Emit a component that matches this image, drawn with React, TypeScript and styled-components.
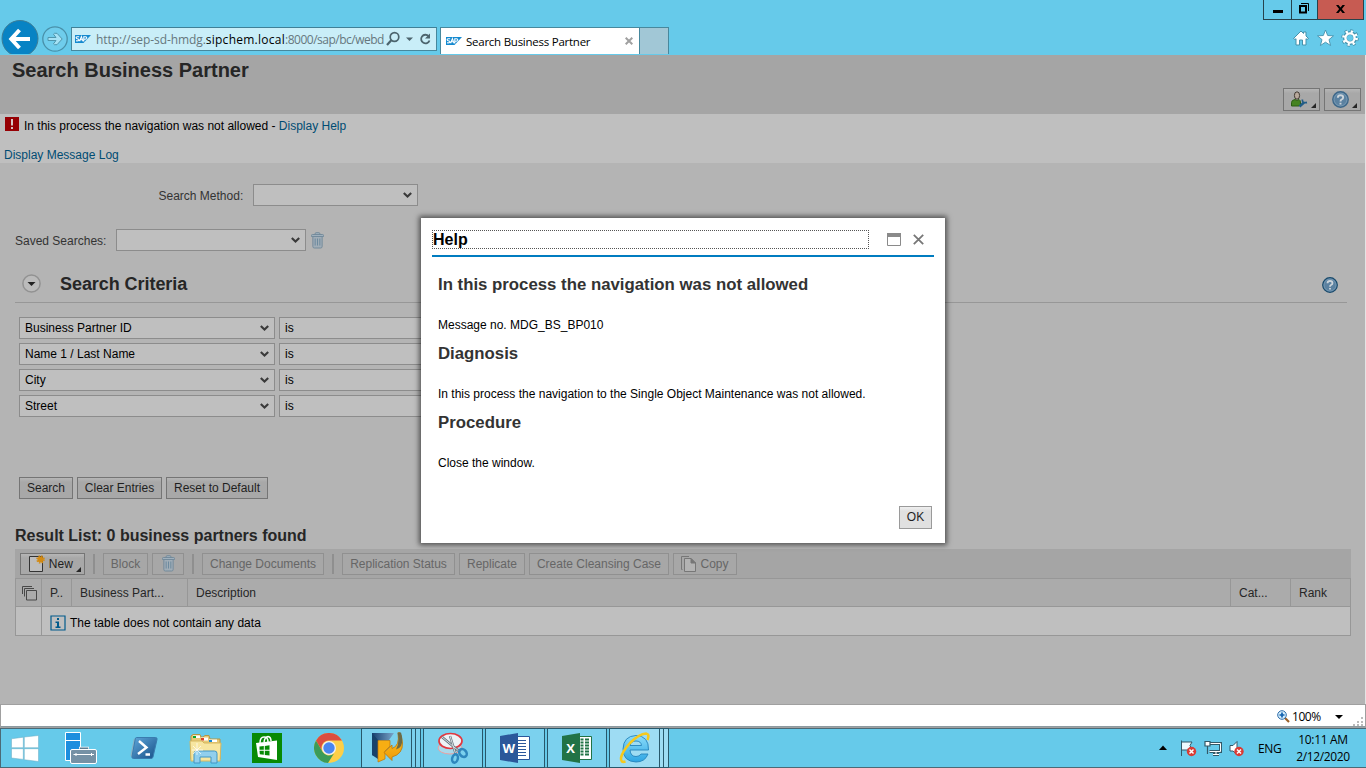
import React from "react";
import styled, { createGlobalStyle } from "styled-components";

const Global = createGlobalStyle`
  * { box-sizing: border-box; }
  html, body { margin: 0; padding: 0; width: 1366px; height: 768px; overflow: hidden; }
  svg { display: block; flex: none; }
`;

const ARIAL = `"Liberation Sans", Arial, sans-serif`;
const SEGOE = `"Open Sans", "Noto Sans", sans-serif`;
const SKY = "#66caea";

const Desktop = styled.div`
  width: 1366px;
  height: 768px;
  display: flex;
  flex-direction: column;
  font: 12px/14px ${ARIAL};
  color: #000;
  white-space: nowrap;
`;

/* ---------- browser frame ---------- */
const Frame = styled.header`
  height: 55px;
  flex: none;
  display: flex;
  align-items: flex-start;
  background: ${SKY};
  font-family: ${SEGOE};
`;
const NavIcons = styled.div`
  width: 71px;
  height: 55px;
`;
const AddressBar = styled.div`
  width: 366px;
  height: 24px;
  margin-top: 27px;
  padding: 0 4px 0 3px;
  display: flex;
  align-items: center;
  background: #c9eef8;
  border: 1px solid #47889d;
  border-top-color: #3f8097;
`;
const Url = styled.div`
  width: 288px;
  margin: 2px 0 0 5px;
  font-size: 12px;
  line-height: 20px;
  letter-spacing: -0.08px;
  color: #66777d;
  b { font-weight: 400; color: #000; letter-spacing: 0.26px; }
`;
const UrlPath = styled.span`
  letter-spacing: -0.5px;
`;
const AddressTools = styled.div`
  display: flex;
  align-items: center;
  margin-left: 2px;
`;
const Tab = styled.div`
  width: 200px;
  height: 27px;
  margin: 27px 0 0 3px;
  padding: 0 6px 0 5px;
  display: flex;
  align-items: center;
  background: #fff;
  border: 1px solid #47889d;
  border-bottom: 0;
`;
const TabText = styled.span`
  flex: 1;
  margin: 1px 0 0 4px;
  font-size: 11.5px;
  letter-spacing: -0.25px;
`;
const NewTab = styled.div`
  width: 29px;
  height: 27px;
  margin-top: 27px;
  background: #a1c7d6;
  border: 1px solid #47889d;
  border-width: 1px 1px 0 0;
`;
const FrameRight = styled.div`
  margin-left: auto;
  width: 103px;
`;
const WindowButtons = styled.div`
  display: flex;
  height: 20px;
  width: 101px;
  border: 1px solid #26434d;
  border-top: 0;
`;
const WindowButton = styled.div<{ $w: number; $close?: boolean }>`
  width: ${(p) => p.$w}px;
  display: flex;
  justify-content: center;
  background: ${(p) => (p.$close ? "#c75b52" : SKY)};
  & + & { border-left: 1px solid #26434d; }
`;
const FrameTools = styled.div`
  display: flex;
  gap: 7px;
  padding: 9px 0 0 29px;
`;

/* ---------- page ---------- */
const Page = styled.main`
  height: 649px;
  flex: none;
  background: #b4b4b4;
  border-right: 1px solid #e4e4e4;
`;
const PageHeader = styled.div`
  height: 59px;
  background: #a5a5a5;
  display: flex;
  justify-content: space-between;
  padding: 4px 4px 0 12px;
`;
const PageTitle = styled.h1`
  margin: 0;
  font-size: 20px;
  line-height: 23px;
  color: #262626;
`;
const HeaderButtons = styled.div`
  display: flex;
  gap: 4px;
  padding-top: 29px;
`;
const Button = styled.div<{ $w: number; $off?: boolean; $light?: boolean; $menu?: boolean }>`
  position: relative;
  width: ${(p) => p.$w}px;
  height: ${(p) => (p.$light || p.$menu ? 23 : 22)}px;
  flex: none;
  display: flex;
  align-items: center;
  justify-content: center;
  gap: 4px;
  line-height: 20px;
  padding: 0 ${(p) => (p.$menu ? 5 : 0)}px ${(p) => (p.$menu ? 0 : 1)}px 0;
  color: ${(p) => (p.$off ? "#666" : "#1f1f1f")};
  border: 1px solid ${(p) => (p.$off ? "#909090" : p.$light ? "#9a9a9a" : "#757575")};
  background: ${(p) =>
    p.$off ? "#a7a7a7" : p.$light ? "linear-gradient(#f0f0f0, #e0e0e0 20%)" : "linear-gradient(#b6b6b6, #a8a8a8 20%)"};
`;
const Corner = styled.i`
  position: absolute;
  right: 3px;
  bottom: 2px;
  border-left: 5px solid transparent;
  border-bottom: 5px solid #262626;
`;
const Messages = styled.div`
  height: 49px;
  background: #bfbfbf;
  padding: 3px 0 0 4px;
`;
const MessageLine = styled.div`
  display: flex;
  gap: 4px;
  height: 31px;
  span { margin-top: 2px; }
`;
const Link = styled.a`
  color: #004c73;
`;
const Content = styled.div`
  padding: 21px 14px 0 15px;
  height: 486px;
`;
const FieldRow = styled.div<{ $indent: number; $gap: number }>`
  display: flex;
  align-items: center;
  padding-left: ${(p) => p.$indent}px;
  margin-bottom: ${(p) => p.$gap}px;
`;
const Label = styled.label<{ $w: number }>`
  width: ${(p) => p.$w}px;
  color: #333;
  padding-top: 1px;
`;
const Select = styled.div<{ $w: number }>`
  width: ${(p) => p.$w}px;
  height: 22px;
  flex: none;
  display: flex;
  align-items: center;
  justify-content: space-between;
  padding: 0 5px 0 5px;
  border: 1px solid #8c8c8c;
  background: #bfbfbf;
`;
const TrashSlot = styled.span`
  margin-left: 5px;
`;
const SectionHead = styled.div`
  height: 38px;
  width: 1332px;
  margin-top: 14px;
  padding: 0 9px 0 7px;
  display: flex;
  align-items: center;
  border-bottom: 1px solid #979797;
`;
const SectionTitle = styled.h2`
  margin: 0 auto 0 19px;
  font-size: 18px;
  line-height: 20px;
  letter-spacing: -0.06px;
  color: #262626;
`;
const HelpSlot = styled.span`
  margin-top: 3px;
`;
const CriteriaGrid = styled.div`
  display: grid;
  gap: 4px;
  padding: 14px 0 0 4px;
  height: 174px;
  align-content: start;
`;
const CriteriaRow = styled.div`
  display: flex;
  gap: 4px;
`;
const SearchButtons = styled.div`
  display: flex;
  gap: 4px;
  padding-left: 4px;
`;
const ResultTitle = styled.h3`
  margin: 27px 0 4px;
  font-size: 16px;
  line-height: 19px;
  color: #262626;
`;
const Toolbar = styled.div`
  height: 29px;
  width: 1336px;
  padding: 4px 0 0 5px;
  display: flex;
  gap: 4px;
  background: #a5a5a5;
`;
const Separator = styled.span`
  width: 2px;
  height: 20px;
  margin: 1px 4px 0 4px;
  background: #8f8f8f;
`;
const Table = styled.div`
  width: 1336px;
  border: 1px solid #979797;
`;
const TableRow = styled.div<{ $head?: boolean }>`
  display: grid;
  grid-template-columns: ${(p) => (p.$head ? "25px 30px 116px 1043px 60px 1fr" : "25px 1fr")};
  height: 28px;
  color: ${(p) => (p.$head ? "#262626" : "#000")};
  background: ${(p) => (p.$head ? "#ababab" : "#bfbfbf")};
  border-bottom: ${(p) => (p.$head ? "1px solid #979797" : "0")};
`;
const Cell = styled.div<{ $low?: boolean }>`
  display: flex;
  align-items: center;
  gap: 4px;
  padding: ${(p) => (p.$low ? 3 : 1)}px 0 0 8px;
  & + & { border-left: 1px solid #979797; }
  &:first-child { padding-left: 6px; }
`;

/* ---------- dialog ---------- */
const Dialog = styled.section`
  position: absolute;
  left: 421px;
  top: 218px;
  width: 524px;
  height: 325px;
  padding: 12px 11px 0;
  background: #fff;
  box-shadow: 0 0 5px 2px rgba(0, 0, 0, 0.55);
`;
const DialogHead = styled.div`
  height: 27px;
  display: flex;
  border-bottom: 2px solid #007cc0;
`;
const DialogTitle = styled.div`
  width: 437px;
  height: 19px;
  margin: 0 18px 0 0;
  border: 1px dotted #555;
  font-weight: bold;
  font-size: 16px;
  line-height: 17px;
`;
const DialogBody = styled.div`
  height: 249px;
  padding: 18px 6px 0;
`;
const DialogHeading = styled.h2`
  margin: 0;
  font-size: 16.8px;
  line-height: 20px;
  color: #333;
`;
const DialogText = styled.p`
  margin: 23px 0 12px;
  line-height: 14px;
`;
const DialogFoot = styled.div`
  display: flex;
  justify-content: flex-end;
  padding-right: 2px;
`;

/* ---------- status bar and taskbar ---------- */
const StatusBar = styled.div`
  height: 24px;
  flex: none;
  display: flex;
  align-items: center;
  justify-content: flex-end;
  background: #fff;
  border: 1px solid #a0a0a0;
  box-shadow: inset 0 -1px 0 #8c9aa0;
  font: 12px/20px ${SEGOE};
`;
const Zoom = styled.span`
  width: 28px;
  margin: 2px 15px 0 2px;
  letter-spacing: -0.45px;
`;
const Taskbar = styled.footer`
  height: 40px;
  flex: none;
  display: flex;
  background: ${SKY};
  border: 1px solid #4b6a76;
  border-right: 0;
  font-family: ${SEGOE};
`;
const Pins = styled.div`
  display: flex;
  width: 360px;
  align-items: center;
`;
const Pin = styled.div<{ $w: number; $x: number }>`
  width: ${(p) => p.$w}px;
  padding-left: ${(p) => p.$x}px;
`;
const Task = styled.div<{ $active?: boolean }>`
  width: 60px;
  height: 40px;
  margin-top: -1px;
  margin-right: 2px;
  flex: none;
  display: flex;
  border: 1px solid #28586b;
  background: ${(p) => (p.$active ? "#9edcf3" : "#7bd1ee")};
`;
const TaskFace = styled.div<{ $stack?: boolean }>`
  flex: 1;
  display: flex;
  align-items: center;
  justify-content: center;
  border-right: ${(p) => (p.$stack ? "1px solid #28586b" : "0")};
`;
const StackEdge = styled.div`
  width: 4px;
  border-right: 1px solid #28586b;
  &:last-child { border-right: 0; }
`;
const Tray = styled.div`
  margin-left: auto;
  display: flex;
  align-items: center;
  height: 38px;
`;
const Lang = styled.span`
  width: 23px;
  margin: 2px 0 0 14px;
  font-size: 12px;
  letter-spacing: -0.3px;
`;
const Clock = styled.div`
  width: 70px;
  margin: 0 8px 0 7px;
  text-align: center;
  font-size: 12px;
  line-height: 17px;
  letter-spacing: -0.35px;
`;

const SapLogo = () => (
  <svg width="16" height="8" viewBox="0 0 16 8">
    <path d="M0 0H16L8.5 8H0Z" fill="#1489cf" />
    <path d="M4.2 1.8H2Q1 1.8 1.2 2.8 1.4 3.6 3 4 4.2 4.4 3.8 5.4 3.4 6 1 5.8M4.6 6.2 6.4 1.6 8 6.2M5.4 4.8H7.6M8.8 6.4V1.8H10.6Q12 2 11.6 3.4 11.2 4.4 9 4.2" fill="none" stroke="#fff" strokeWidth="1.1" />
  </svg>
);
const Chevron = () => (
  <svg width="9" height="6" viewBox="0 0 9 6">
    <path d="M0.8 0.9 4.5 4.5 8.2 0.9" fill="none" stroke="#3a3a3a" strokeWidth="2.1" />
  </svg>
);
const Trash = () => (
  <svg width="13" height="17" viewBox="0 0 14 17" preserveAspectRatio="none" fill="none" stroke="#72899a">
    <path d="M2 4.5V14.5Q2 16 3.5 16H10.5Q12 16 12 14.5V4.5Z" fill="#a0adb7" />
    <path d="M0.5 3.5Q0.5 2.5 1.5 2.5H12.5Q13.5 2.5 13.5 3.5V4.5H0.5ZM4.5 2.5V1.5Q4.5 0.7 5.5 0.7H8.5Q9.5 0.7 9.5 1.5V2.5" fill="#9fb0bd" />
    <path d="M4.5 6.5V13.5M7 6.5V13.5M9.5 6.5V13.5" stroke="#6b889d" />
  </svg>
);
const HelpIcon = ({ soft }: { soft?: boolean }) => (
  <svg width={soft ? 17 : 16} height={soft ? 17 : 16} viewBox="0 0 16 16">
    <circle cx="8" cy="8" r="7.3" fill="#5b81a0" stroke={soft ? "#3d6789" : "#17496b"} strokeWidth="1.2" />
    <circle cx="8" cy="8" r="6" fill="none" stroke="#7c9eb8" strokeWidth="0.7" />
    <path d="M5.5 6.3Q5.5 4 8 4 10.5 4 10.5 6 10.5 7.3 9 8 8 8.5 8 9.8M8 11V12.6" fill="none" stroke="#ccd4da" strokeWidth="1.8" />
  </svg>
);

const FrameNavIcons = () => (
  <svg width="71" height="55" viewBox="0 0 71 55">
    <defs><clipPath id="navclip"><path d="M0 0H71V54H0Z" /></clipPath></defs>
    <g clipPath="url(#navclip)">
      <circle cx="20" cy="38.5" r="18" fill="#0883c4" stroke="#3e7d96" />
      <path d="M19.500 30 11.300 39 19.500 48M11.500 39H30" fill="none" stroke="#fff" strokeWidth="4" />
      <circle cx="55" cy="39" r="12.2" fill="#6fcdec" stroke="#4991aa" strokeWidth="1.3" />
      <path d="M48 37.5H56L53.5 34.2 54.5 33.3H57L62.2 39 57 44.7H54.5L53.5 43.8 56 40.5H48Z" fill="#a5e2f5" stroke="#4f96ad" />
    </g>
  </svg>
);

const ServerManager = () => (
  <svg width="34" height="32" viewBox="0 0 34 32">
    <path d="M0.500 0.500H15.5V28.500H0.500Z" fill="#1d8ede" stroke="#fff" />
    <path d="M0.500 8.5H15.5" stroke="#fff" />
    <path d="M15.5 18V16.2H22.5V18" fill="none" stroke="#fff" strokeWidth="3" />
    <path d="M15.5 18V16.2H22.5V18" fill="none" stroke="#5d7d92" strokeWidth="1.6" />
    <rect x="5.500" y="17.500" width="26" height="14" rx="1.5" fill="#7591a5" stroke="#fff" />
    <path d="M8.5 22.5H29M11 21V24M26.500 21V24" stroke="#fff" />
  </svg>
);
const PowerShell = () => (
  <svg width="30" height="24" viewBox="0 0 30 24">
    <defs><linearGradient id="ps" x1="0" x2="1" y1="0" y2="1"><stop offset="0" stopColor="#60a8dc" /><stop offset="1" stopColor="#164f86" /></linearGradient></defs>
    <path d="M4 2 0.500 19Q0.600 21.500 3 21.5L6 5Z" fill="#8bb2c5" />
    <path d="M6.5 1.5H25.5Q27.5 1.5 27 3.5L23 21Q22.6 22.5 21 22.5H3.5Q1.5 22.5 2 20.5L5.3 2.8Q5.6 1.5 6.5 1.5Z" fill="url(#ps)" stroke="#397caf" />
    <path d="M9 5 16.5 11.5 8 18M15.5 18.5H20" fill="none" stroke="#fff" strokeWidth="2.4" />
  </svg>
);
const Explorer = () => (
  <svg width="33" height="31" viewBox="0 0 33 31">
    <path d="M2 7V3L4 1.5H11L12 4H14L16 2.5H20L21 6H31V26H2Z" fill="#e7ca76" stroke="#b59645" />
    <path d="M4 2.5H11V5H4Z" fill="#fff" /><path d="M4 3H7V5H4Z" fill="#08a42f" />
    <path d="M12 4.5H19V7.5H12Z" fill="#fff" /><path d="M12 5H15V7.5H12Z" fill="#dc4328" />
    <path d="M20 6.5H28V9H20Z" fill="#fff" /><path d="M20 7H23V9H20Z" fill="#1688d2" />
    <path d="M1 8H13L15 10H32L31 28H2Z" fill="#f7e6a0" stroke="#d5b75f" />
    <path d="M5 30V20.5Q5 18 7.5 18H25.5Q28 18 28 20.5V30H22V24H11V30Z" fill="#91cfee" stroke="#4096c5" />
    <path d="M8 10V22M3 17H14M4 13 12 21M12 13 4 21" stroke="#fff" strokeWidth="0.7" />
  </svg>
);
const Store = () => (
  <svg width="30" height="30" viewBox="0 0 30 30">
    <path d="M0 0H30V30H0Z" fill="#078a05" />
    <path d="M8 10Q8 4 12 4 16 4 16 9M12 9Q13 3.5 16 3.5 19 4 19 8" fill="none" stroke="#fff" strokeWidth="1.5" />
    <path d="M4 10 25 7.5V27L6 24Z" fill="#fff" />
    <path d="M7.5 13.6 11.8 13V16.7H7.5ZM12.8 12.9 17.5 12.3V16.7H12.8ZM7.5 17.7H11.8V21.8L7.8 21.2ZM12.8 17.7H17.5V22.6L12.8 22Z" fill="#078a05" />
  </svg>
);
const Chrome = () => (
  <svg width="30" height="30" viewBox="0 0 30 30">
    <circle cx="15" cy="15" r="15" fill="#fdcf47" />
    <path d="M2 7.5A15 15 0 0 1 28 7.5H15A7.5 7.5 0 0 0 8.5 18.8Z" fill="#dc4d40" />
    <path d="M2 7.5 8.5 18.8A7.5 7.5 0 0 0 20 20.6L14 30A15 15 0 0 1 2 7.5Z" fill="#3c9b58" />
    <circle cx="15" cy="15" r="7" fill="#f1f1f1" /><circle cx="15" cy="15" r="5.7" fill="#4a86ef" />
  </svg>
);
const SapGui = () => (
  <svg width="32" height="32" viewBox="0 0 32 32">
    <defs>
      <linearGradient id="sg" x1="0" x2="1"><stop offset="0" stopColor="#173f6f" /><stop offset="1" stopColor="#7aa5c9" /></linearGradient>
      <linearGradient id="so" x1="0" x2="0" y1="0" y2="1"><stop offset="0" stopColor="#ffc420" /><stop offset="1" stopColor="#ed9a08" /></linearGradient>
    </defs>
    <path d="M1 1H23L18 8H8V26L1 23Z" fill="url(#sg)" />
    <path d="M1 1 7 8V27L1 23Z" fill="#17426b" />
    <path d="M7 8.500H19V14L14 19V27L7 30Z" fill="#f7ae13" stroke="#bd7606" strokeWidth="0.7" />
    <path d="M27 1Q29 14 21 16.500V13L13 20.500 21 28.500V25Q32 22 31.500 11 31 4 28.500 0.500Z" fill="url(#so)" stroke="#bd7606" strokeWidth="0.8" />
    <path d="M26.500 0.500H30Q32.500 8 30 14 28 17 25 17.500 29 10 26.500 0.500Z" fill="#6b6b48" />
  </svg>
);
const Snip = () => (
  <svg width="32" height="32" viewBox="0 0 32 32">
    <ellipse cx="13" cy="16" rx="12" ry="6" fill="#a9d9ea" stroke="#ef9f9f" />
    <ellipse cx="13.500" cy="9" rx="11.500" ry="7.500" fill="#eef3f6" stroke="#e2383f" strokeWidth="1.700" />
    <path d="M5 5 23 20M13 4 19 23" stroke="#66757e" strokeWidth="2.400" /><path d="M5 5 23 20M13 4 19 23" stroke="#d6dde1" />
    <ellipse cx="26" cy="21" rx="4.300" ry="3.300" fill="none" stroke="#2e87bd" strokeWidth="2.600" transform="rotate(50 26 21)" />
    <ellipse cx="18" cy="26.500" rx="2.800" ry="4.200" fill="none" stroke="#2e87bd" strokeWidth="2.500" transform="rotate(15 18 26.500)" />
  </svg>
);
const Office = ({ color, letter }: { color: string; letter: "W" | "X" }) => (
  <svg width="30" height="30" viewBox="0 0 30 30">
    <path d="M16 3.500H29.500V26.500H16Z" fill="#fff" stroke={color} />
    {letter === "W" ? (
      <path d="M17 7.500H26M17 10.500H26M17 13.500H26M17 16.500H26M17 19.500H26M17 22.500H26" stroke={color} strokeWidth="1.200" />
    ) : (
      <path d="M18.500 6.500H21.500M23 6.500H27M18.500 9.500H21.500M23 9.500H27M18.500 12.500H21.500M23 12.500H27M18.500 15.500H21.500M23 15.500H27M18.500 18.500H21.500M23 18.500H27M18.500 21.500H21.500M23 21.500H27" stroke={color} strokeWidth="2" />
    )}
    <path d="M0 3 18 0V30L0 27Z" fill={color} />
    <text x="8.700" y="19.800" textAnchor="middle" fontFamily="Open Sans" fontWeight="700" fontSize="13" fill="#fff">{letter}</text>
  </svg>
);
const IE = () => (
  <svg width="32" height="32" viewBox="0 0 32 32">
    <defs><linearGradient id="ie" x1="0" x2="0" y1="0" y2="1"><stop offset="0" stopColor="#8bdcfa" /><stop offset="1" stopColor="#2da5e3" /></linearGradient></defs>
    <path d="M29.500 18H11Q11.500 24.500 17 24.500 20.500 24.500 22 22H29Q26 30 17 30 4 29.500 4 17 4.500 4 17 3.500 30 4 29.500 18ZM11 13.500H22.500Q22 9 17 9 12 9 11 13.500Z" fill="url(#ie)" stroke="#2583bb" strokeWidth="0.9" />
    <path d="M28.500 8Q31 2 27 1.500 20 2 11 11 3 20 2 26 1.500 31 6.500 29.500" fill="none" stroke="#f6c91c" strokeWidth="2.600" />
  </svg>
);

const criteria = ["Business Partner ID", "Name 1 / Last Name", "City", "Street"];

export default function App() {
  return (
    <Desktop>
      <Global />
      <Frame>
        <NavIcons><FrameNavIcons /></NavIcons>
        <AddressBar>
          <SapLogo />
          <Url>http://sep-sd-hmdg.<b>sipchem.local</b><UrlPath>:8000/sap/bc/webd</UrlPath></Url>
          <AddressTools>
            <svg width="46" height="16" viewBox="0 0 46 16" fill="none" stroke="#4c646d">
              <circle cx="8.500" cy="6" r="4.300" strokeWidth="1.700" /><path d="M5.500 9 1 14" strokeWidth="2.200" />
              <path d="M20 6.500H27L23.500 10Z" fill="#4c646d" stroke="none" />
              <path d="M42.500 5A4.300 4.300 0 1 0 43.500 9.500" strokeWidth="1.800" /><path d="M44 2.500V7.500H39Z" fill="#4c646d" stroke="none" />
            </svg>
          </AddressTools>
        </AddressBar>
        <Tab>
          <SapLogo />
          <TabText>Search Business Partner</TabText>
          <svg width="8" height="8" viewBox="0 0 8 8"><path d="M0.700 0.700 7.300 7.300M7.300 0.700 0.700 7.300" stroke="#a0a0a0" strokeWidth="2" /></svg>
        </Tab>
        <NewTab />
        <FrameRight>
          <WindowButtons>
            <WindowButton $w={27}><svg width="10" height="19"><path d="M0 10H10V13H0Z" /></svg></WindowButton>
            <WindowButton $w={26}>
              <svg width="11" height="19" fill="none" stroke="#000"><path d="M1 6H7V12.500H1Z" strokeWidth="2" /><path d="M2 3.500H9.500V11" strokeWidth="1" /></svg>
            </WindowButton>
            <WindowButton $w={46} $close><svg width="9" height="19"><path d="M0 5H2.500L4.500 7.500 6.500 5H9L5.900 9 9 13H6.500L4.500 10.500 2.500 13H0L3.100 9Z" /></svg></WindowButton>
          </WindowButtons>
          <FrameTools>
            <svg width="18" height="18" viewBox="0 0 18 18"><path d="M1.500 9.500 9 2 11.500 4.500V3H14V7L16.500 9.500 15 10.500 14 9.700V16H10.500V11H7.500V16H4V9.700L3 10.500Z" fill="#fff" stroke="#4591ab" /></svg>
            <svg width="17" height="18" viewBox="0 0 17 18"><path d="M8.500 1 10.700 6.500 16.500 6.900 12 10.600 13.600 16.500 8.500 13.200 3.400 16.500 5 10.600 0.500 6.900 6.300 6.500Z" fill="#fff" stroke="#4591ab" strokeWidth="0.900" /></svg>
            <svg width="18" height="18" viewBox="0 0 18 18" fill="none">
              <circle cx="9" cy="9" r="6.800" stroke="#4591ab" strokeWidth="3.800" strokeDasharray="2.670 2.670" />
              <circle cx="9" cy="9" r="5" stroke="#4591ab" strokeWidth="4" />
              <circle cx="9" cy="9" r="6.500" stroke="#fff" strokeWidth="2.800" strokeDasharray="2.150 2.955" />
              <circle cx="9" cy="9" r="4.600" stroke="#fff" strokeWidth="2.400" />
            </svg>
          </FrameTools>
        </FrameRight>
      </Frame>

      <Page>
        <PageHeader>
          <PageTitle>Search Business Partner</PageTitle>
          <HeaderButtons>
            <Button $w={37} $menu>
              <svg width="18" height="17" viewBox="0 0 18 17">
                <ellipse cx="7" cy="4.500" rx="2.600" ry="3.700" fill="#b9a99c" stroke="#443c35" />
                <path d="M1.500 15V11.500Q1.500 9 5 8.500L7 9.500 9 8.500Q10.500 9 10.500 12V14L9 15Z" fill="#458321" stroke="#2d5d14" />
                <path d="M9.500 15.500 14 11.500" stroke="#225d87" strokeWidth="2.500" fill="none" />
                <path d="M12.500 8.500Q11.500 12.500 17 11.500" stroke="#225d87" strokeWidth="1.800" fill="none" />
              </svg>
              <Corner />
            </Button>
            <Button $w={37} $menu><HelpIcon soft /><Corner /></Button>
          </HeaderButtons>
        </PageHeader>
        <Messages>
          <MessageLine>
            <svg width="16" height="14" viewBox="0 0 16 14"><path d="M1 0H15V14H1Z" fill="#960004" /><path d="M7 2H9V8.500H7ZM7 10H9V12H7Z" fill="#d5c8c8" /></svg>
            <span>In this process the navigation was not allowed - <Link>Display Help</Link></span>
          </MessageLine>
          <Link>Display Message Log</Link>
        </Messages>
        <Content>
          <FieldRow $indent={143.5} $gap={23}><Label $w={94.5}>Search Method:</Label><Select $w={165}><span /><Chevron /></Select></FieldRow>
          <FieldRow $indent={0} $gap={0}>
            <Label $w={101}>Saved Searches:</Label><Select $w={190}><span /><Chevron /></Select>
            <TrashSlot><Trash /></TrashSlot>
          </FieldRow>
          <SectionHead>
            <svg width="19" height="19" viewBox="0 0 19 19"><circle cx="9.500" cy="9.500" r="8.600" fill="#bbb" stroke="#929292" strokeWidth="1.500" /><path d="M5.500 8H13.500L9.500 12Z" fill="#222" /></svg>
            <SectionTitle>Search Criteria</SectionTitle>
            <HelpSlot><HelpIcon /></HelpSlot>
          </SectionHead>
          <CriteriaGrid>
            {criteria.map((name) => (
              <CriteriaRow key={name}>
                <Select $w={256}>{name}<Chevron /></Select>
                <Select $w={170}>is<Chevron /></Select>
              </CriteriaRow>
            ))}
          </CriteriaGrid>
          <SearchButtons>
            <Button $w={54}>Search</Button><Button $w={85}>Clear Entries</Button><Button $w={102}>Reset to Default</Button>
          </SearchButtons>
          <ResultTitle>Result List: 0 business partners found</ResultTitle>
          <Toolbar>
            <Button $w={65}>
              <svg width="16" height="17" viewBox="0 0 16 17">
                <path d="M0.500 1.500H13.500V16.500H0.500Z" fill="#bdbdbd" stroke="#333" />
                <circle cx="11.500" cy="4.500" r="3" fill="#d28a13" /><circle cx="11.500" cy="4.500" r="3.500" fill="none" stroke="#d28a13" strokeWidth="1.500" strokeDasharray="1.400 1.400" />
              </svg>
              <span>New&nbsp;</span><Corner />
            </Button>
            <Separator />
            <Button $w={45} $off>Block</Button><Button $w={32} $off><Trash /></Button>
            <Separator />
            <Button $w={122} $off>Change Documents</Button>
            <Separator />
            <Button $w={113} $off>Replication Status</Button><Button $w={66} $off>Replicate</Button><Button $w={140} $off>Create Cleansing Case</Button>
            <Button $w={64} $off>
              <svg width="15" height="16" viewBox="0 0 15 16" fill="none" stroke="#777"><path d="M1.500 13.500H0.500V0.500H8" /><path d="M3.500 2.500H10L14.500 7V15.500H3.500Z" fill="#b3b3b3" /><path d="M10 2.500V7H14.500Z" fill="#777" /></svg>
              Copy
            </Button>
          </Toolbar>
          <Table>
            <TableRow $head>
              <Cell><svg width="15" height="15" viewBox="0 0 15 15" fill="none" stroke="#484848"><path d="M0.500 8V0.500H10M2.500 10.500V2.500H12" /><path d="M4.500 4.500H14.500V14H4.500Z" /></svg></Cell>
              <Cell>P..</Cell><Cell>Business Part...</Cell><Cell>Description</Cell><Cell>Cat...</Cell><Cell>Rank</Cell>
            </TableRow>
            <TableRow>
              <Cell />
              <Cell $low>
                <svg width="16" height="16" viewBox="0 0 16 16"><path d="M1 1H15V15H1Z" fill="none" stroke="#005b8c" strokeWidth="1.200" /><path d="M7 3H9V5H7ZM5.500 6.500H9V11.500H10.500V13H5.500V11.500H7V8H5.500Z" fill="#005b8c" /></svg>
                The table does not contain any data
              </Cell>
            </TableRow>
          </Table>
        </Content>
      </Page>

      <StatusBar>
        <svg width="13" height="13" viewBox="0 0 13 13"><path d="M8 8 12 12" stroke="#9a5f26" strokeWidth="2.200" /><circle cx="5" cy="5" r="4.300" fill="#d5edfb" stroke="#2c6ca9" /><path d="M2.500 5H7.500M5 2.500V7.500" stroke="#1161b0" strokeWidth="1.700" /></svg>
        <Zoom>100%</Zoom>
        <svg width="30" height="20" viewBox="0 0 30 20"><path d="M0 9H8L4 13Z" /><path d="M26 11H28V13H26ZM22 15H24V17H22ZM26 15H28V17H26ZM18 18H20V20H18ZM22 18H24V20H22ZM26 18H28V20H26Z" fill="#bbb" /></svg>
      </StatusBar>

      <Taskbar>
        <Pins>
          <Pin $w={64} $x={10}>
            <svg width="28" height="27" viewBox="0 0 28 27"><path d="M0.500 3.800 12.300 2.200V12.700H0.500ZM13.300 2 27.500 0.500V12.700H13.300ZM0.500 13.700H12.300V24.400L0.500 23ZM13.300 13.700H27.500V26.500L13.300 24.700Z" fill="#fff" stroke="#68abc3" strokeWidth="0.500" /></svg>
          </Pin>
          <Pin $w={65} $x={0}><ServerManager /></Pin>
          <Pin $w={59} $x={0}><PowerShell /></Pin>
          <Pin $w={63} $x={0}><Explorer /></Pin>
          <Pin $w={62} $x={0}><Store /></Pin>
          <Pin $w={30} $x={0}><Chrome /></Pin>
        </Pins>
        <Task><TaskFace $stack><SapGui /></TaskFace><StackEdge /><StackEdge /></Task>
        <Task><TaskFace><Snip /></TaskFace></Task>
        <Task><TaskFace><Office color="#2b579a" letter="W" /></TaskFace></Task>
        <Task><TaskFace><Office color="#217346" letter="X" /></TaskFace></Task>
        <Task $active><TaskFace $stack><IE /></TaskFace><StackEdge /><StackEdge /></Task>
        <Tray>
          <svg width="88" height="18" viewBox="-3 0 88 18">
            <path d="M0 11 4 6.500 8 11Z" />
            <g fill="none" stroke="#325968">
              <path d="M22.500 1.500V17M22.500 3H33L31 6.500 33 11H22.500" fill="#eefaff" />
              <path d="M51 4.500H61.500V12.500H50.500M54 15.500H60M57 13V15" strokeWidth="3" /><path d="M51 4.500H61.500V12.500H50.500M54 15.500H60M57 13V15" stroke="#fff" />
              <path d="M46 2.500H51V7H46ZM48.500 7V15" strokeWidth="1.200" fill="#fff" />
              <path d="M71 6.500H74L78 2.500V15.500L74 12H71Z" fill="#fff" />
            </g>
            <circle cx="32.500" cy="12.500" r="4.700" fill="#d93b34" /><path d="M30.500 10.500 34.500 14.500M34.500 10.500 30.500 14.500" stroke="#fff" strokeWidth="1.500" />
            <circle cx="80" cy="12.500" r="4.700" fill="#d93b34" /><path d="M78 10.500 82 14.500M82 10.500 78 14.500" stroke="#fff" strokeWidth="1.500" />
          </svg>
          <Lang>ENG</Lang>
          <Clock>10:11 AM<br />2/12/2020</Clock>
        </Tray>
      </Taskbar>

      <Dialog>
        <DialogHead>
          <DialogTitle>Help</DialogTitle>
          <svg width="14" height="13" viewBox="0 0 14 13" style={{ marginTop: 3 }}><path d="M0.500 0.500H13.500V12.500H0.500Z" fill="none" stroke="#8a8a8a" /><path d="M0 0H14V4H0Z" fill="#8a8a8a" /></svg>
          <svg width="11" height="11" viewBox="0 0 11 11" style={{ margin: "4px 0 0 12px" }}><path d="M0.800 0.800 10.200 10.200M10.200 0.800 0.800 10.200" stroke="#777" strokeWidth="1.800" /></svg>
        </DialogHead>
        <DialogBody>
          <DialogHeading>In this process the navigation was not allowed</DialogHeading>
          <DialogText>Message no. MDG_BS_BP010</DialogText>
          <DialogHeading>Diagnosis</DialogHeading>
          <DialogText>In this process the navigation to the Single Object Maintenance was not allowed.</DialogText>
          <DialogHeading>Procedure</DialogHeading>
          <DialogText>Close the window.</DialogText>
        </DialogBody>
        <DialogFoot><Button $w={33} $light>OK</Button></DialogFoot>
      </Dialog>
    </Desktop>
  );
}
